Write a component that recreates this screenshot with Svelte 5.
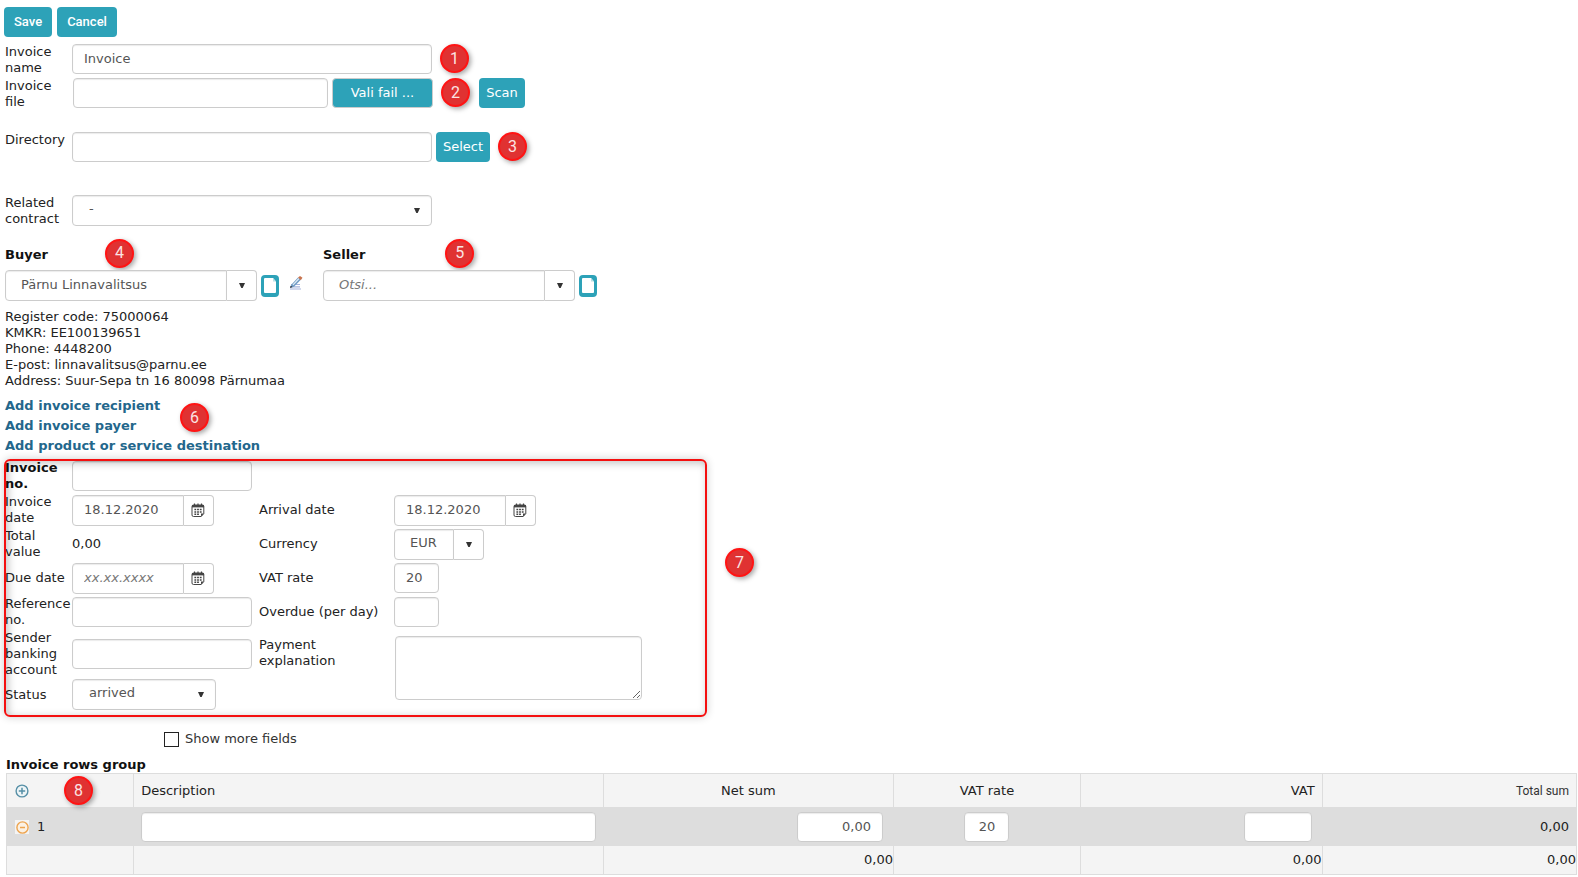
<script lang="ts">
    interface LineTotals {
        net: string;
        vat: string;
        total: string;
    }

    let invoiceName = $state('Invoice');
    let buyer = $state('Pärnu Linnavalitsus');
    let seller = $state('');
    let invoiceDate = $state('18.12.2020');
    let arrivalDate = $state('18.12.2020');
    let dueDate = $state('');
    let currency = $state('EUR');
    let vatRate = $state('20');
    let status = $state('arrived');
    let showMore = $state(false);
    let rows = $state([{ description: '', net: '0,00', vatRate: '20', vat: '', total: '0,00' }]);

    const totals: LineTotals = { net: '0,00', vat: '0,00', total: '0,00' };

    const buyerInfo = [
        'Register code: 75000064',
        'KMKR: EE100139651',
        'Phone: 4448200',
        'E-post: linnavalitsus@parnu.ee',
        'Address: Suur-Sepa tn 16 80098 Pärnumaa',
    ];

    const partyLinks = [
        'Add invoice recipient',
        'Add invoice payer',
        'Add product or service destination',
    ];

    const addRow = () => {
        rows.push({ description: '', net: '0,00', vatRate: '20', vat: '', total: '0,00' });
    };

    const removeRow = (index: number) => {
        rows.splice(index, 1);
    };
</script>

{#snippet badge(n: number)}
    <span class="badge">{n}</span>
{/snippet}

{#snippet arrow()}
    <svg class="arrow" viewBox="0 0 6 5" width="6" height="5" aria-hidden="true">
        <path d="M0 0h6L3.700 5H2.300z" fill="#333" />
    </svg>
{/snippet}

{#snippet calendar()}
    <svg viewBox="0 0 14 15" width="14" height="15" aria-hidden="true">
        <path d="M2.500 2h9A1.300 1.300 0 0 1 12.800 3.300V10.500L10.200 13.500H2.500A1.500 1.500 0 0 1 1 12V3.500A1.500 1.500 0 0 1 2.500 2z" fill="#fff" stroke="#444" stroke-width="1" />
        <path d="M1 2h12v2.400H1z" fill="#444" />
        <path d="M3.500 .5v2.500M7 .5v2.500M10.500 .5v2.500" stroke="#444" stroke-width="1.200" />
        <path d="M3.400 5.800h1.800v1.500H3.400zM6.100 5.800h1.800v1.500H6.100zM8.800 5.800h1.800v1.500H8.800zM3.400 8.200h1.800v1.500H3.400zM6.100 8.200h1.800v1.500H6.100zM8.800 8.200h1.800v1.500H8.800zM3.400 10.600h1.800v1.500H3.400zM6.100 10.600h1.800v1.500H6.100z" fill="#444" />
        <path d="M10 13.500v-3h3z" fill="#444" />
    </svg>
{/snippet}

{#snippet documentButton(label: string)}
    <button class="document" type="button" aria-label={label}>
        <svg viewBox="0 0 18 22" width="18" height="22" aria-hidden="true">
            <path d="M3 4a1 1 0 0 1 1-1h8l3 3.500V17a1 1 0 0 1-1 1H4a1 1 0 0 1-1-1z" fill="#fff" />
            <path d="M12 3l3 3.500h-3z" fill="#b9dfe6" />
        </svg>
    </button>
{/snippet}

<main>
    <div class="toolbar">
        <button class="primary strong" type="button">Save</button>
        <button class="primary strong" type="button">Cancel</button>
    </div>

    <div class="row">
        <label for="invoice-name">Invoice name</label>
        <input id="invoice-name" class="wide" bind:value={invoiceName} />
        {@render badge(1)}
    </div>
    <div class="row file">
        <label for="invoice-file">Invoice file</label>
        <div class="picker">
            <input id="invoice-file" />
            <button class="primary browse" type="button">Vali fail ...</button>
        </div>
        {@render badge(2)}
        <button class="primary scan" type="button">Scan</button>
    </div>
    <div class="row directory">
        <label for="directory">Directory</label>
        <div class="picker-select">
            <input id="directory" class="wide" />
            <button class="primary" type="button">Select</button>
        </div>
        {@render badge(3)}
    </div>
    <div class="row contract">
        <label for="contract">Related contract</label>
        <span class="select wide">
            <select id="contract"><option>-</option></select>
            {@render arrow()}
        </span>
    </div>

    <div class="parties">
        <section>
            <h2><label for="buyer">Buyer</label>{@render badge(4)}</h2>
            <div class="party">
                <span class="combo">
                    <input id="buyer" bind:value={buyer} />
                    <button type="button" aria-label="Choose buyer">{@render arrow()}</button>
                </span>
                {@render documentButton('New buyer')}
                <button class="edit" type="button" aria-label="Edit buyer">
                    <svg viewBox="0 0 14 16" width="14" height="16" aria-hidden="true">
                        <path d="M2 8.500h9M1 10.800h10M1 13h11" stroke="#a5b3dc" stroke-width="1.200" />
                        <path d="M2.500 8.500L9 1.500l2.800 2.300L5 10.800l-4 1z" fill="#6f9bc4" />
                        <path d="M4 8.800l6-6.300" stroke="#e0ecf6" stroke-width="1.200" />
                        <path d="M9 1.500L11 0l2.500 1.800-1.700 2.400z" fill="#c8744f" />
                        <path d="M1 12l.8-2.200L3.600 11z" fill="#333" />
                    </svg>
                </button>
            </div>
        </section>
        <section>
            <h2 class="seller"><label for="seller">Seller</label>{@render badge(5)}</h2>
            <div class="party">
                <span class="combo">
                    <input id="seller" placeholder="Otsi..." bind:value={seller} />
                    <button type="button" aria-label="Choose seller">{@render arrow()}</button>
                </span>
                {@render documentButton('New seller')}
            </div>
        </section>
    </div>

    <div class="info">
        {#each buyerInfo as line}
            <div>{line}</div>
        {/each}
    </div>

    <div class="links">
        <ul>
            {#each partyLinks as link, i}
                <li>
                    <a href="#party-{i}">{link}</a>
                </li>
            {/each}
        </ul>
        {@render badge(6)}
    </div>

    <div class="details-wrap">
        <div class="details">
            <div class="left">
                <label class="required" for="invoice-no">Invoice no.</label>
                <input id="invoice-no" />

                <label for="invoice-date">Invoice date</label>
                <span class="date">
                    <input id="invoice-date" bind:value={invoiceDate} />
                    <button type="button" aria-label="Pick invoice date">{@render calendar()}</button>
                </span>

                <span>Total value</span>
                <output>0,00</output>

                <label for="due-date">Due date</label>
                <span class="date">
                    <input id="due-date" placeholder="xx.xx.xxxx" bind:value={dueDate} />
                    <button type="button" aria-label="Pick due date">{@render calendar()}</button>
                </span>

                <label for="reference-no">Reference no.</label>
                <input id="reference-no" />

                <label for="sender-account">Sender banking account</label>
                <input id="sender-account" />

                <label for="status">Status</label>
                <span class="select status">
                    <select id="status" bind:value={status}>
                        <option>arrived</option>
                    </select>
                    {@render arrow()}
                </span>
            </div>

            <div class="right">
                <label for="arrival-date">Arrival date</label>
                <span class="date">
                    <input id="arrival-date" bind:value={arrivalDate} />
                    <button type="button" aria-label="Pick arrival date">{@render calendar()}</button>
                </span>

                <label for="currency">Currency</label>
                <span class="combo currency">
                    <input id="currency" bind:value={currency} />
                    <button type="button" aria-label="Choose currency">{@render arrow()}</button>
                </span>

                <label for="vat-rate">VAT rate</label>
                <input id="vat-rate" class="short" bind:value={vatRate} />

                <label for="overdue">Overdue (per day)</label>
                <input id="overdue" class="short" />

                <label class="top" for="explanation">Payment explanation</label>
                <textarea id="explanation"></textarea>
            </div>
        </div>
        {@render badge(7)}
    </div>

    <label class="more">
        <input type="checkbox" bind:checked={showMore} />
        Show more fields
    </label>

    <div class="invoice-rows">
        <table>
            <caption>Invoice rows group</caption>
            <colgroup>
                <col class="c-no" />
                <col class="c-description" />
                <col class="c-net" />
                <col class="c-rate" />
                <col class="c-vat" />
                <col />
            </colgroup>
            <thead>
                <tr>
                    <th>
                        <div class="number head">
                            <button class="icon" type="button" aria-label="Add row" onclick={addRow}>
                                <svg viewBox="0 0 14 14" width="14" height="14" aria-hidden="true">
                                    <circle cx="7" cy="7" r="5.900" fill="#edf4f6" stroke="#568fa6" stroke-width="1.400" />
                                    <path d="M7 3.800v6.400M3.800 7h6.400" stroke="#568fa6" stroke-width="1.500" />
                                </svg>
                            </button>
                            {@render badge(8)}
                        </div>
                    </th>
                    <th>Description</th>
                    <th class="center">Net sum</th>
                    <th class="center">VAT rate</th>
                    <th class="end">VAT</th>
                    <th class="end total">Total sum</th>
                </tr>
            </thead>
            <tbody>
                {#each rows as row, i}
                    <tr>
                        <td>
                            <div class="number">
                                <button class="icon" type="button" aria-label="Remove row" onclick={() => removeRow(i)}>
                                    <svg viewBox="0 0 14 14" width="14" height="14" aria-hidden="true">
                                        <path d="M0 0h14v14H0z" fill="#f4f4f4" />
                                        <circle cx="7.500" cy="7.500" r="5.600" fill="#fbf1e4" stroke="#eda44f" stroke-width="1.400" />
                                        <path d="M5 7.500h5" stroke="#eda44f" stroke-width="1.500" />
                                    </svg>
                                </button>
                                {i + 1}
                            </div>
                        </td>
                        <td><input class="description" aria-label="Description" bind:value={row.description} /></td>
                        <td class="end field"><input class="net" aria-label="Net sum" bind:value={row.net} /></td>
                        <td class="center"><input class="short" aria-label="VAT rate" bind:value={row.vatRate} /></td>
                        <td class="end field"><input class="vat" aria-label="VAT" bind:value={row.vat} /></td>
                        <td class="end">{row.total}</td>
                    </tr>
                {/each}
            </tbody>
            <tfoot>
                <tr>
                    <td></td>
                    <td></td>
                    <td>{totals.net}</td>
                    <td></td>
                    <td>{totals.vat}</td>
                    <td>{totals.total}</td>
                </tr>
            </tfoot>
        </table>
    </div>
</main>

<style>
    :global(body) {
        margin: 0;
        background: #fff;
    }

    main {
        padding: 7px 1px 0 5px;
        color: #222;
        font: 13px/16px Verdana, "DejaVu Sans", sans-serif;
    }

    main :global(*) {
        box-sizing: border-box;
    }

    input,
    select,
    textarea,
    button {
        margin: 0;
        font: inherit;
    }

    input,
    select,
    textarea {
        height: 30px;
        padding: 0 11px 2px;
        border: 1px solid #ccc;
        border-radius: 4px;
        background: #fff;
        box-shadow: inset 0 1px 1px rgba(0, 0, 0, 0.08);
        color: #555;
    }

    ::placeholder {
        color: #777;
        font-style: italic;
        opacity: 1;
    }

    button {
        padding: 0;
        border: 0;
        background: none;
        cursor: pointer;
    }

    .primary {
        height: 30px;
        padding: 0 7px;
        border-radius: 4px;
        background: #2da2b8;
        color: #fff;
    }

    .strong {
        padding: 0 10px;
        font-family: Roboto, sans-serif;
        font-weight: 500;
    }

    .badge {
        display: flex;
        flex: none;
        align-items: center;
        justify-content: center;
        width: 29px;
        height: 29px;
        border: 2px solid #ff1414;
        border-radius: 50%;
        background: #e03232;
        box-shadow: 2px 2px 5px rgba(0, 0, 0, 0.35);
        color: #fbe3e3;
        font: 16px/16px Roboto, sans-serif;
    }

    .toolbar {
        display: flex;
        gap: 5px;
        height: 30px;
        margin: 0 0 7px -1px;
    }

    .row {
        display: flex;
        align-items: flex-start;
        min-height: 32px;
    }

    .row > label {
        width: 67px;
        padding-right: 8px;
    }

    .wide {
        width: 360px;
    }

    .row .badge {
        margin-left: 8px;
    }

    .file {
        margin-top: 2px;
    }

    .picker {
        display: flex;
        gap: 4px;
        width: 361px;
        padding-left: 1px;
    }

    .picker input {
        flex: 1;
        min-width: 0;
    }

    .browse {
        width: 101px;
        border: 1px solid #ccc;
    }

    .scan {
        width: 46px;
        margin-left: 9px;
        padding: 0;
    }

    .directory {
        margin-top: 22px;
    }

    .directory > label {
        padding-right: 0;
    }

    .picker-select {
        display: flex;
        gap: 4px;
    }

    .contract {
        margin-top: 31px;
    }

    .select {
        display: grid;
        align-items: center;
    }

    .select > :global(*) {
        grid-area: 1 / 1;
    }

    .select select {
        width: 100%;
        height: 31px;
        padding: 0 16px 3px;
        appearance: none;
    }

    .select .arrow {
        justify-self: end;
        margin-right: 12px;
        pointer-events: none;
    }

    .parties {
        display: flex;
        gap: 20px;
        margin-top: 11px;
    }

    .parties section {
        width: 298px;
    }

    h2 {
        display: flex;
        align-items: center;
        gap: 57px;
        height: 30px;
        margin: 0 0 2px;
        color: #111;
        font-size: 13px;
        line-height: 16px;
    }

    h2 label {
        padding-top: 3px;
    }

    .seller {
        gap: 80px;
    }

    .party {
        display: flex;
        align-items: center;
        gap: 4px;
    }

    .combo,
    .date {
        display: flex;
        height: 31px;
    }

    .combo {
        width: 252px;
    }

    .combo input,
    .date input {
        flex: 1;
        min-width: 0;
        height: 31px;
        border-radius: 4px 0 0 4px;
    }

    .combo input {
        padding: 0 0 3px 15px;
    }

    .combo button,
    .date button {
        display: flex;
        align-items: center;
        justify-content: center;
        width: 30px;
        border: 1px solid #ccc;
        border-left: 0;
        border-radius: 0 4px 4px 0;
        background: #fff;
    }

    .date button {
        padding-right: 2px;
    }

    .document {
        display: flex;
        border-radius: 4px;
        background: #2da2b8;
    }

    .edit {
        display: flex;
        margin-left: 6px;
        padding-bottom: 4px;
    }

    .info {
        margin-top: 8px;
    }

    .links {
        display: flex;
        gap: 26px;
        align-items: flex-start;
        margin-top: 7px;
    }

    .links .badge {
        margin-top: 7px;
    }

    .links ul {
        width: 149px;
        margin: 0;
        padding: 0;
        list-style: none;
        white-space: nowrap;
    }

    .links li {
        height: 20px;
        line-height: 20px;
    }

    .links a {
        color: #23678c;
        font-weight: bold;
        text-decoration: none;
    }

    .details-wrap {
        display: flex;
        gap: 18px;
        align-items: flex-start;
        margin-top: 4px;
    }

    .details-wrap > .badge {
        margin-top: 88px;
    }

    .details {
        position: relative;
        display: flex;
        gap: 7px;
        padding: 0 65px 7px 0;
    }

    /* highlight frame, drawn over the edges of the labels */
    .details::after {
        position: absolute;
        inset: -1px 0 0 -1px;
        border: 2px solid #f40f0f;
        border-radius: 6px;
        box-shadow: 0 0 8px rgba(0, 0, 0, 0.2), inset 2px 2px 8px rgba(0, 0, 0, 0.25);
        content: '';
        pointer-events: none;
    }

    .left,
    .right {
        display: grid;
        row-gap: 2px;
        align-items: center;
        align-content: start;
        justify-items: start;
    }

    .left {
        grid-template-columns: 67px 180px;
        grid-template-rows: repeat(5, 32px) 47px 31px;
    }

    .left > input {
        width: 180px;
    }

    .right {
        grid-template-columns: 135px 248px;
        grid-template-rows: repeat(4, 32px) 70px;
        padding-top: 34px;
    }

    .required {
        color: #111;
        font-weight: bold;
    }

    .date {
        width: 142px;
    }

    .status {
        width: 144px;
    }

    .currency {
        width: 90px;
    }

    .short {
        width: 45px;
    }

    .top {
        align-self: start;
        width: 80px;
        padding-top: 7px;
    }

    textarea {
        display: block;
        align-self: end;
        justify-self: end;
        width: 247px;
        height: 64px;
        resize: both;
    }

    .more {
        display: flex;
        gap: 6px;
        align-items: center;
        width: max-content;
        margin: 14px 0 0 159px;
        color: #333;
    }

    .more input {
        width: 15px;
        height: 15px;
        padding: 0;
        border: 1px solid #222;
        border-radius: 0;
        box-shadow: none;
        appearance: none;
    }

    .more input:checked {
        background: #2da2b8;
    }

    .invoice-rows {
        padding-left: 1px;
    }

    table {
        width: 100%;
        margin-top: 10px;
        border-collapse: collapse;
        table-layout: fixed;
    }

    caption {
        color: #111;
        font-weight: bold;
        text-align: left;
    }

    .c-no {
        width: 8.1%;
    }

    .c-description {
        width: 29.9%;
    }

    .c-net {
        width: 18.5%;
    }

    .c-rate {
        width: 11.9%;
    }

    .c-vat {
        width: 15.4%;
    }

    th,
    td {
        padding: 0 7px;
        border: 1px solid #ddd;
        background: #f4f4f4;
        font-weight: normal;
        text-align: left;
    }

    th {
        height: 34px;
    }

    tbody td {
        height: 38px;
        background: #ddd;
    }

    tfoot td {
        height: 29px;
        padding: 0;
        text-align: right;
    }

    .center {
        text-align: center;
    }

    .end {
        text-align: right;
    }

    .total {
        color: #333;
        font-size: 12px;
        font-family: Roboto, sans-serif;
    }

    .field {
        padding-right: 10px;
    }

    .number {
        display: flex;
        gap: 8px;
        align-items: center;
        padding-left: 1px;
    }

    .head {
        gap: 35px;
    }

    .icon {
        display: flex;
    }

    td input {
        display: inline-block;
        padding-bottom: 0;
        vertical-align: middle;
    }

    .description {
        width: 100%;
    }

    .net {
        width: 86px;
        text-align: right;
    }

    td .short {
        padding: 0;
        text-align: center;
    }

    .vat {
        width: 68px;
    }
</style>
